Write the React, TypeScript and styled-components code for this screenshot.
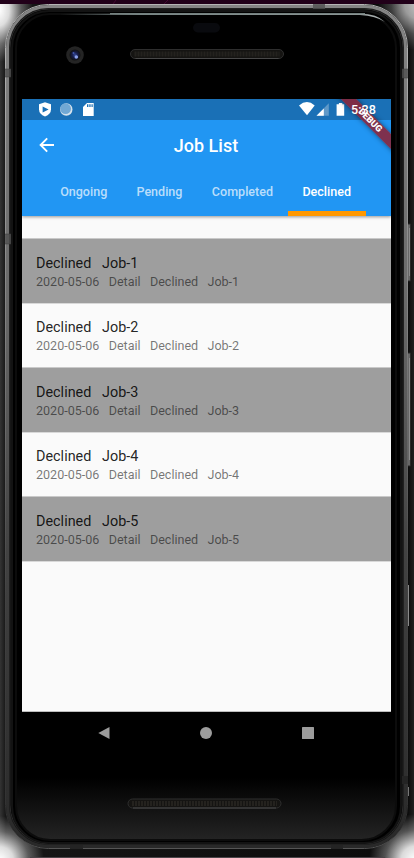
import React from "react";
import styled, { createGlobalStyle } from "styled-components";

const GlobalStyle = createGlobalStyle`
  * { box-sizing: border-box; }
  html, body { margin: 0; padding: 0; overflow: hidden; background: #000; }
`;

const Stage = styled.main`
  position: relative;
  width: 414px;
  height: 858px;
  overflow: hidden;
  padding: 99px 23px 0 22px;
  font-family: Roboto, "Noto Sans", sans-serif;
`;

const DeviceArt = styled.svg`
  position: absolute;
  inset: 0;
  display: block;
`;

const Screen = styled.section`
  position: relative;
  display: flex;
  flex-direction: column;
  width: 369px;
  height: 613px;
  background: #fafafa;
  border-bottom: 1px solid #bdbdbd;
  overflow: hidden;
`;

const Header = styled.header`
  display: flex;
  flex-direction: column;
  height: 117px;
  flex: none;
  background: #2196f3;
  box-shadow: 0 1px 3px rgba(0, 0, 0, 0.4);
`;

const StatusBar = styled.div`
  display: flex;
  align-items: center;
  justify-content: space-between;
  height: 21px;
  padding: 0 14px 0 15px;
  background: #1a70b6;
  color: #fff;
`;

const StatusGroup = styled.div`
  display: flex;
  align-items: center;
`;

const Clock = styled.time`
  position: relative;
  z-index: 2;
  margin-left: 6px;
  width: 26px;
  font-size: 12.6px;
  font-weight: 500;
  line-height: 21px;
`;

const TitleBar = styled.div`
  display: grid;
  grid-template-columns: 50px 1fr 50px;
  align-items: center;
  height: 50px;
`;

const BackButton = styled.button`
  display: flex;
  align-items: center;
  justify-content: center;
  padding: 0;
  border: 0;
  background: none;
  height: 50px;
`;

const Title = styled.h1`
  margin: 0;
  padding: 2px 1px 0 0;
  text-align: center;
  color: #fff;
  font-size: 17.95px;
  font-weight: 500;
  line-height: 24px;
  letter-spacing: 0.05px;
`;

const Tabs = styled.nav`
  display: flex;
  height: 46px;
  padding-left: 24px;
`;

const Tab = styled.button<{ $active?: boolean; $width: number }>`
  width: ${(p) => p.$width}px;
  flex: none;
  padding: 2px 0.6px 0 0;
  border: 0;
  border-bottom: 5px solid ${(p) => (p.$active ? "#ff9800" : "transparent")};
  background: none;
  color: ${(p) => (p.$active ? "#fff" : "rgba(255,255,255,.7)")};
  font-family: inherit;
  font-size: 12.56px;
  font-weight: 500;
  text-align: center;
  white-space: nowrap;
`;

const JobList = styled.ul`
  list-style: none;
  margin: 22px 0 0;
  padding: 0;
`;

const JobRow = styled.li<{ $shaded: boolean }>`
  height: 64.6px;
  padding: 15.5px 14px 0;
  border-top: 1px solid ${(p) => (p.$shaded ? "#c9c9c9" : "#d8d8d8")};
  background: ${(p) => (p.$shaded ? "#9e9e9e" : "#fafafa")};
  &:last-child { height: 65.6px; border-bottom: 1px solid #d8d8d8; }
`;

const JobName = styled.div`
  color: rgba(0, 0, 0, 0.87);
  font-size: 14.36px;
  line-height: 17px;
  letter-spacing: 0.02px;
  white-space: pre;
`;

const JobDetail = styled.div`
  margin-top: 1px;
  color: rgba(0, 0, 0, 0.54);
  font-size: 12.56px;
  line-height: 17px;
  white-space: pre;
`;

const DebugRibbon = styled.div`
  position: absolute;
  z-index: 1;
  top: 16px;
  right: -27px;
  width: 96px;
  height: 11px;
  transform: rotate(45deg);
  background: rgba(139, 35, 55, 0.88);
  box-shadow: 0 0 5px rgba(0, 0, 0, 0.5);
  color: #fff;
  font-size: 9.1px;
  font-weight: 900;
  line-height: 11px;
  text-align: center;
`;

const NavBar = styled.nav`
  position: relative;
  display: flex;
  align-items: center;
  justify-content: space-between;
  height: 42px;
  padding: 0 77px 0 76px;
`;

const jobs = [1, 2, 3, 4, 5];

function Speaker({ x, y }: { x: number; y: number }) {
  return (
    <g>
      <rect x={x} y={y} width="153" height="9" rx="4.5" fill="#151412" stroke="#2e2e2e" />
      <path d={`M${x + 5} ${y + 9}h143`} stroke="#484848" />
      <path d={`M${x + 4} ${y + 4.5}h145`} stroke="#24221e" strokeWidth="5" strokeDasharray="2 1" />
    </g>
  );
}

function Device() {
  return (
    <DeviceArt width="414" height="858" viewBox="0 0 414 858">
      <defs>
        <linearGradient id="metal" x1="0" y1="0" x2="0" y2="1">
          <stop offset="0" stopColor="#858585" />
          <stop offset=".35" stopColor="#6a6a6a" />
          <stop offset=".65" stopColor="#424242" />
          <stop offset="1" stopColor="#292929" />
        </linearGradient>
        <linearGradient id="edge" x1="0" y1="0" x2="0" y2="1">
          <stop offset="0" stopColor="#b5b5b5" />
          <stop offset=".4" stopColor="#7d7d7d" />
          <stop offset=".7" stopColor="#424242" />
          <stop offset=".98" stopColor="#303030" />
          <stop offset="1" stopColor="#555" />
        </linearGradient>
        <linearGradient id="face" x1="0" y1="0" x2="0" y2="1">
          <stop offset=".925" stopColor="#000" />
          <stop offset="1" stopColor="#242424" />
        </linearGradient>
        <linearGradient id="sideShade">
          <stop offset="0" stopColor="#343434" />
          <stop offset=".014" stopColor="#161616" />
          <stop offset=".985" stopColor="#0b0b0b" />
          <stop offset="1" stopColor="#202020" />
        </linearGradient>
        <linearGradient id="shine">
          <stop offset="0" stopColor="#7d8c8c" stopOpacity="0" />
          <stop offset=".25" stopColor="#7d8c8c" />
          <stop offset="1" stopColor="#a8afaf" />
        </linearGradient>
        <radialGradient id="glow">
          <stop offset="0" stopColor="#fff" />
          <stop offset=".3" stopColor="#fff" stopOpacity=".85" />
          <stop offset=".65" stopColor="#fff" stopOpacity=".3" />
          <stop offset="1" stopColor="#fff" stopOpacity="0" />
        </radialGradient>
        <radialGradient id="lens">
          <stop offset="0" stopColor="#34489c" />
          <stop offset=".5" stopColor="#171c48" />
          <stop offset="1" stopColor="#111" />
        </radialGradient>
      </defs>
      <rect width="414" height="858" fill="url(#sideShade)" />
      <ellipse cx="-1" cy="10" rx="34" ry="52" fill="url(#glow)" />
      <ellipse cx="416" cy="4" rx="38" ry="46" fill="url(#glow)" opacity=".7" />
      <circle cx="0" cy="860" r="44" fill="url(#glow)" />
      <circle cx="415" cy="860" r="46" fill="url(#glow)" />
      <path d="M30 857.5H385" stroke="#4a4549" />
      <rect width="414" height="4" fill="#210019" />
      <path d="M164 4l4-4M113 4l3-4" stroke="#430731" />

      <path d="M407.5 224h3v57h-3zM407.5 353h3v113h-3z" fill="#686868" stroke="#292929" />
      <path d="M409.5 228v48M409.5 358v102" stroke="#8b8b8b" />
      <path d="M408.5 585v41" stroke="#898989" />
      <path d="M408.5 787v9" stroke="#777" />

      <rect x="5.5" y="4.5" width="402" height="844" rx="43" fill="#171717" stroke="url(#edge)" />
      <rect x="7.5" y="6.5" width="398" height="840" rx="41" fill="none" stroke="url(#metal)" strokeWidth="3" />
      <rect x="10" y="9" width="393" height="835" rx="39" fill="#050505" stroke="#2b2b2b" strokeWidth="1" />
      <rect x="12" y="11" width="389" height="832" rx="37" fill="#000" stroke="#131313" strokeWidth="2" />
      <rect x="16" y="14" width="380" height="826" rx="34" fill="url(#face)" stroke="#0c0c0c" strokeWidth="2" />
      <path d="M60 13.7H360Q377 13.7 385 22Q376 15.8 360 15H60z" fill="url(#shine)" />
      <path d="M110 13.8H365" stroke="#74807f" strokeWidth="1.4" />

      <path d="M5 69h6v8H5zM402 69h6v9h-6zM5 234h6v10H5zM313 4h12v5h-12z" fill="#505050" opacity=".8" />
      <path d="M402 776h6v8h-6zM70 845h13v4H70zM331 845h12v4h-12z" fill="#242424" />
      <path d="M5 69h6M5 77h6M402 69h6M402 78h6M5 234h6M5 244h6" stroke="#3f3f3f" strokeWidth=".5" />

      <rect x="193" y="23" width="27" height="9.5" rx="4.7" fill="#090a0e" />
      <circle cx="75" cy="55" r="8.8" fill="#242424" />
      <circle cx="75" cy="55" r="5.5" fill="url(#lens)" />
      <circle cx="76.3" cy="57" r="1.8" fill="#8ba1ed" />
      <circle cx="73.5" cy="53" r="1" fill="#4257af" />
      <Speaker x={130.5} y={49.5} />
      <Speaker x={128} y={799} />
    </DeviceArt>
  );
}

function LeftStatusIcons() {
  return (
    <svg width="60" height="21" viewBox="0 0 60 21" aria-hidden="true">
      <path d="M8 3.2L14 5.3v4.9q0 4.9-6 7.4Q2 15.1 2 10.2V5.3z" fill="#fff" />
      <path d="M5.6 7.6l6 2.9-6 2.9z" fill="#1a70b6" />
      <circle cx="29.3" cy="10.5" r="6.2" fill="#d5e2ec" />
      <circle cx="28.6" cy="9.7" r="5.4" fill="#71a8d4" />
      <path d="M50 4h6.7v13H46V8z" fill="#fff" />
      <path d="M50 5.3h1.4V8H50zM52.3 5.3h1.3V8h-1.3zM54.5 5.3h1.2V8h-1.2z" fill="#1a70b6" />
    </svg>
  );
}

function RightStatusIcons() {
  return (
    <svg width="46" height="21" viewBox="0 0 46 21" aria-hidden="true">
      <path d="M0 6.4Q8-.3 15.7 6.4L8 16.3z" fill="#fff" />
      <path d="M29.8 4.3v12.4H17.5z" fill="#6099c8" />
      <path d="M24.8 9.4v7.3h-7.3z" fill="#fff" />
      <path d="M39.9 3.9h3.4v1.3h1.9v11.5h-7.6V5.2h2.3z" fill="#fff" />
    </svg>
  );
}

export default function App() {
  return (
    <>
      <GlobalStyle />
      <Stage>
        <Device />
        <Screen>
          <Header>
            <StatusBar>
              <LeftStatusIcons />
              <StatusGroup>
                <RightStatusIcons />
                <Clock>5:38</Clock>
              </StatusGroup>
            </StatusBar>
            <TitleBar>
              <BackButton aria-label="Back">
                <svg width="16" height="16" viewBox="0 0 16 16" fill="none" stroke="#fff" strokeWidth="1.9">
                  <path d="M15 8H2M8.2 1.4L1.6 8l6.6 6.6" />
                </svg>
              </BackButton>
              <Title>Job List</Title>
            </TitleBar>
            <Tabs>
              <Tab $width={76}>Ongoing</Tab>
              <Tab $width={75.5}>Pending</Tab>
              <Tab $width={90.5}>Completed</Tab>
              <Tab $width={78} $active>Declined</Tab>
            </Tabs>
          </Header>
          <JobList>
            {jobs.map((n) => (
              <JobRow key={n} $shaded={n % 2 === 1}>
                <JobName>{`Declined   Job-${n}`}</JobName>
                <JobDetail>{`2020-05-06   Detail   Declined   Job-${n}`}</JobDetail>
              </JobRow>
            ))}
          </JobList>
          <DebugRibbon>DEBUG</DebugRibbon>
        </Screen>
        <NavBar>
          <svg width="12" height="14" viewBox="1 0 12 14"><path d="M1.3 7L12.5 1v12z" fill="#9c9c9c" /></svg>
          <svg width="12" height="12" viewBox="0 0 12 12"><circle cx="6" cy="6" r="6" fill="#9c9c9c" /></svg>
          <svg width="12" height="12" viewBox="0 0 12 12"><rect width="12" height="12" rx=".5" fill="#9c9c9c" /></svg>
        </NavBar>
      </Stage>
    </>
  );
}
